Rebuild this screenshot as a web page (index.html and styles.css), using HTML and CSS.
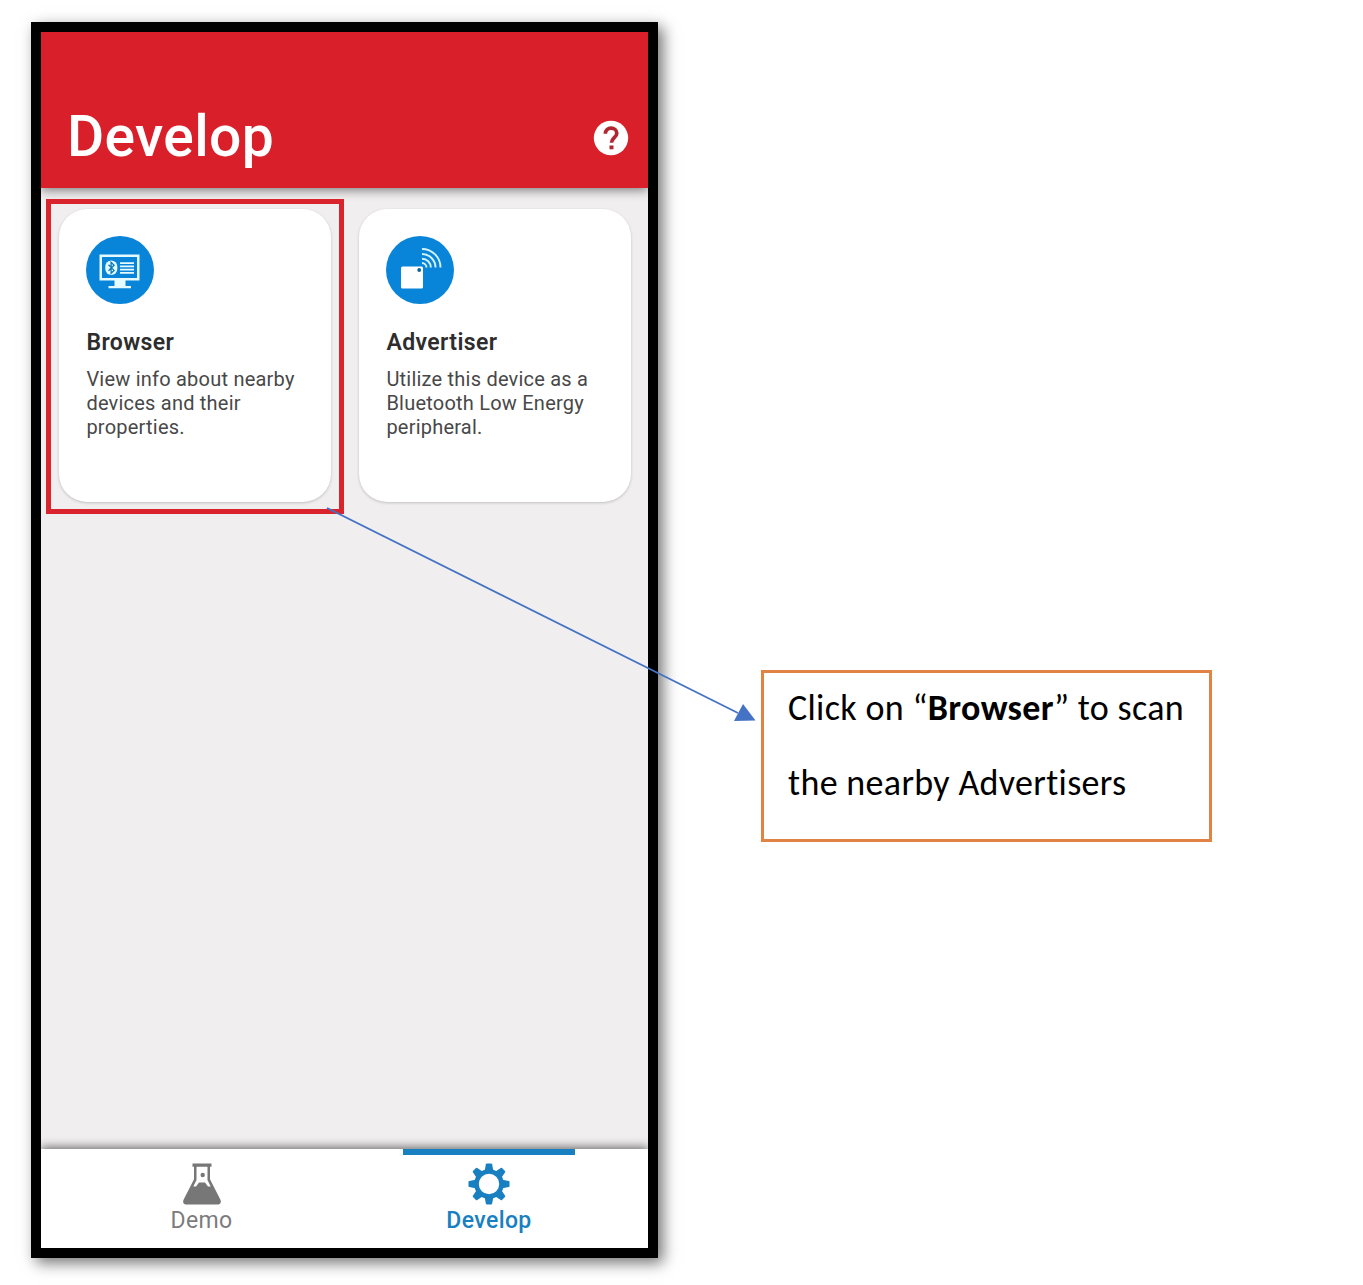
FILE: index.html
```html
<!DOCTYPE html>
<html lang="en">
<head>
<meta charset="utf-8">
<title>Develop</title>
<link rel="stylesheet" href="styles.css">
</head>
<body>
<main class="page">
  <section class="phone">
    <header class="appbar">
      <h1 class="appbar-title">Develop</h1>
      <svg class="help" viewBox="0 0 36 36">
        <circle cx="18" cy="18" r="17.2" fill="#fff"/>
        <path d="M12.400 13.800C12.400 10.300 14.900 8.200 18.100 8.200S23.800 10.200 23.800 13.200c0 4.300-5.300 4.700-5.300 9.500" fill="none" stroke="#b02732" stroke-width="3.700"/>
        <rect x="16.500" y="25.500" width="4" height="3.800" fill="#b02732"/>
      </svg>
    </header>
    <div class="cards">
      <article class="card">
        <svg class="card-icon" viewBox="0 0 68 68">
          <circle cx="34" cy="34" r="34" fill="#0884d8"/>
          <g fill="#e6fbff">
            <path fill-rule="evenodd" d="M13.500 18.500h40v26h-40zM16 21v21h35V21z"/>
            <path d="M28.500 44h11v6H45v2.300H22.500V50h6z"/>
            <rect x="19.300" y="24.500" width="12" height="14.600" rx="6"/>
            <path d="M34 26.200h14v1.700H34zM34 29.500h14v1.700H34zM34 32.800h14v1.700H34zM34 36.100h14v1.700H34z"/>
          </g>
          <path d="M22.500 28.800l5.600 5.600-3 2.900V26.300l3 2.900-5.600 5.600" fill="none" stroke="#0878b8" stroke-width="1.300"/>
        </svg>
        <h2 class="card-title">Browser</h2>
        <p class="card-text">View info about nearby<br>devices and their<br>properties.</p>
      </article>
      <article class="card">
        <svg class="card-icon" viewBox="0 0 68 68">
          <circle cx="34" cy="34" r="34" fill="#0884d8"/>
          <rect x="15" y="30.500" width="22" height="22" rx="1.500" fill="#fff"/>
          <circle cx="33.200" cy="34" r="1.900" fill="#08609c"/>
          <g fill="none" stroke="#d5f3ff" stroke-width="1.900">
            <path d="M36 13a18.500 18.500 0 0 1 18.500 18.500M36 18a13.500 13.500 0 0 1 13.500 13.500M36 22.700a8.800 8.800 0 0 1 8.800 8.800M36 27a4.500 4.500 0 0 1 4.500 4.500"/>
          </g>
        </svg>
        <h2 class="card-title">Advertiser</h2>
        <p class="card-text">Utilize this device as a<br>Bluetooth Low Energy<br>peripheral.</p>
      </article>
    </div>
    <nav class="tabs">
      <div class="tab">
        <svg class="tab-icon" viewBox="0 0 42 42">
          <path fill="#777" fill-rule="evenodd" d="M11.500.5h19v3.200H29v12.500l10.300 20.300c1.300 2.700.2 5-2.700 5H5.400c-2.900 0-4-2.300-2.700-5L13 16.200V3.700h-1.500zM15.500 3.700V17l-3.200 6.500h2.700l3-4h6l3 4h2.700L26.500 17V3.700z"/>
          <circle cx="21.700" cy="12" r="2.200" fill="#777"/>
        </svg>
        <span class="tab-label">Demo</span>
      </div>
      <div class="tab active">
        <svg class="tab-icon" viewBox="-21 -21 42 42">
          <g fill="#187fc1">
            <path fill-rule="evenodd" d="M-14.800 0a14.800 14.800 0 1 0 29.600 0a14.800 14.800 0 1 0-29.600 0M-10.200 0a10.200 10.200 0 1 1 20.400 0a10.200 10.200 0 1 1-20.400 0"/>
            <path id="tooth" d="M-4.300-13.500l1.200-6.200q.2-.8 1-.8h4.200q.8 0 1 .8l1.200 6.200z"/>
            <use href="#tooth" transform="rotate(45)"/>
            <use href="#tooth" transform="rotate(90)"/>
            <use href="#tooth" transform="rotate(135)"/>
            <use href="#tooth" transform="rotate(180)"/>
            <use href="#tooth" transform="rotate(225)"/>
            <use href="#tooth" transform="rotate(270)"/>
            <use href="#tooth" transform="rotate(315)"/>
          </g>
        </svg>
        <span class="tab-label">Develop</span>
      </div>
    </nav>
  </section>
  <aside class="note">
    <p class="note-line">Click on “<b>Browser</b>” to scan</p>
    <p class="note-line">the nearby Advertisers</p>
  </aside>
  <svg class="annotation" viewBox="0 0 1363 1285">
    <rect x="48.500" y="201.500" width="293" height="310" fill="none" stroke="#d9242d" stroke-width="5"/>
    <path d="M327 508L738 713" fill="none" stroke="#4472c4" stroke-width="1.800"/>
    <path d="M743 704l12.500 16.500-21.500.5z" fill="#4472c4"/>
  </svg>
</main>
</body>
</html>
```
FILE: styles.css
```css
* { box-sizing: border-box; }
body { margin: 0; background: #fff; }
h1, h2, p { margin: 0; }
.page {
  position: relative;
  display: flex;
  align-items: flex-start;
  width: 1363px;
  height: 1285px;
  padding: 22px 0 0 31px;
  overflow: hidden;
}
.phone {
  display: flex;
  flex-direction: column;
  width: 627px;
  height: 1236px;
  border: 10px solid #000;
  background: #f0eeef;
  box-shadow: 5px 5px 14px rgba(0, 0, 0, .55);
  font-family: Roboto, sans-serif;
}
.appbar {
  display: flex;
  justify-content: space-between;
  height: 156px;
  padding: 71px 19px 0 26px;
  background: #d91f29;
  box-shadow: 0 2px 10px rgba(0, 0, 0, .5);
  color: #fff;
  clip-path: inset(0 0 -14px 0);
}
.appbar-title {
  font-size: 57px;
  line-height: 68px;
  font-weight: 500;
  letter-spacing: .35px;
}
.help { width: 36px; height: 36px; margin-top: 16.500px; }
.cards {
  display: grid;
  grid-template-columns: 272px 272px;
  gap: 28px;
  flex: 1;
  align-items: start;
  padding: 21px 0 0 18.400px;
}
.card {
  height: 293px;
  padding: 27px 0 0 27px;
  border-radius: 28px;
  background: #fff;
  box-shadow: 0 1px 3px rgba(0, 0, 0, .2);
}
.card-icon { display: block; width: 68px; height: 68px; }
.card-title {
  margin-top: 25px;
  color: #2d2d2d;
  font-size: 23px;
  line-height: 28px;
  font-weight: 600;
  letter-spacing: .4px;
  white-space: nowrap;
}
.card-text {
  margin-top: 10px;
  color: #484848;
  font-size: 20px;
  line-height: 24px;
  letter-spacing: .22px;
  white-space: nowrap;
}
.tabs {
  display: grid;
  grid-template-columns: 321px 1fr;
  height: 99px;
  background: #fff;
  box-shadow: 0 -2px 9px rgba(0, 0, 0, .55);
  clip-path: inset(-14px 0 0 0);
}
.tab {
  display: flex;
  flex-direction: column;
  align-items: center;
  padding-top: 14px;
  color: #7c7c7c;
  font-size: 23px;
  letter-spacing: .4px;
}
.tab.active {
  width: 172px;
  margin-left: 41px;
  padding-top: 8px;
  border-top: 6px solid #187fc1;
  color: #187fc1;
  font-weight: 500;
}
.tab-icon { width: 42px; height: 42px; }
.tab-label { margin-top: 2px; line-height: 28px; }
.note {
  width: 451px;
  height: 172px;
  margin: 648px 0 0 103px;
  padding: 0 0 0 24px;
  border: 3px solid #e08344;
  background: #fff;
  color: #000;
  font-family: Carlito, Lato, sans-serif;
  font-size: 36px;
  letter-spacing: .33px;
}
.note-line {
  line-height: 75px;
  white-space: nowrap;
}
.note-line:first-child { margin-top: -2px; }
.annotation {
  position: absolute;
  left: 0;
  top: 0;
  width: 1363px;
  height: 1285px;
}
```
